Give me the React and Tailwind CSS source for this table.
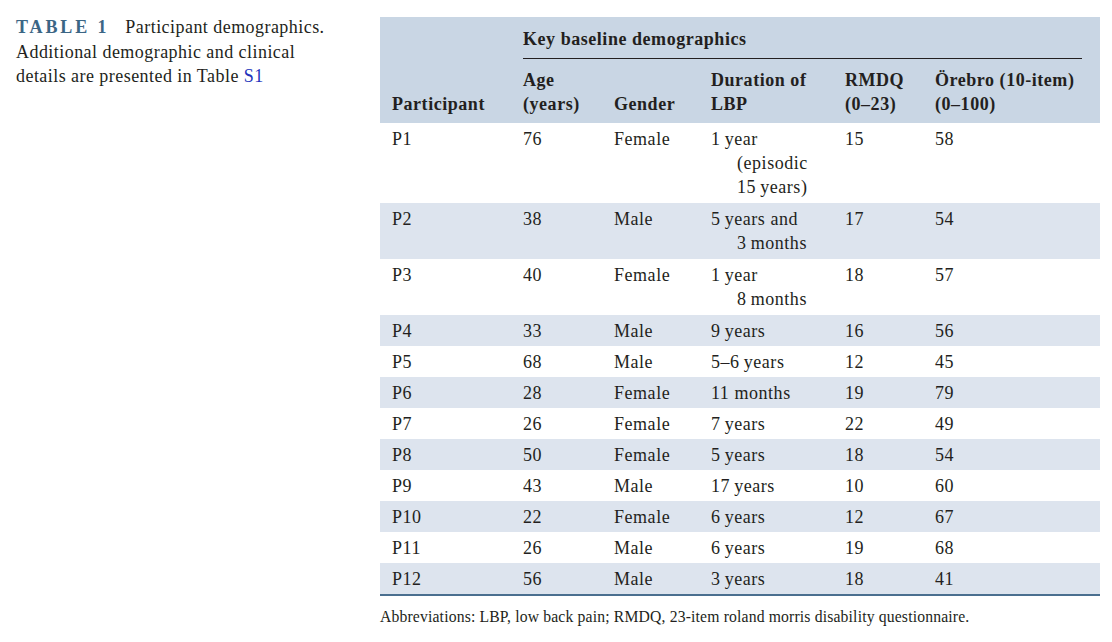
const rows = [
  { id: "P1", age: "76", gender: "Female", duration: ["1\u2009year", "(episodic", "15\u2009years)"], rmdq: "15", orebro: "58" },
  { id: "P2", age: "38", gender: "Male", duration: ["5\u2009years and", "3\u2009months"], rmdq: "17", orebro: "54" },
  { id: "P3", age: "40", gender: "Female", duration: ["1\u2009year", "8\u2009months"], rmdq: "18", orebro: "57" },
  { id: "P4", age: "33", gender: "Male", duration: ["9\u2009years"], rmdq: "16", orebro: "56" },
  { id: "P5", age: "68", gender: "Male", duration: ["5\u20136\u2009years"], rmdq: "12", orebro: "45" },
  { id: "P6", age: "28", gender: "Female", duration: ["11 months"], rmdq: "19", orebro: "79" },
  { id: "P7", age: "26", gender: "Female", duration: ["7\u2009years"], rmdq: "22", orebro: "49" },
  { id: "P8", age: "50", gender: "Female", duration: ["5\u2009years"], rmdq: "18", orebro: "54" },
  { id: "P9", age: "43", gender: "Male", duration: ["17\u2009years"], rmdq: "10", orebro: "60" },
  { id: "P10", age: "22", gender: "Female", duration: ["6\u2009years"], rmdq: "12", orebro: "67" },
  { id: "P11", age: "26", gender: "Male", duration: ["6\u2009years"], rmdq: "19", orebro: "68" },
  { id: "P12", age: "56", gender: "Male", duration: ["3\u2009years"], rmdq: "18", orebro: "41" },
];

const serif = { fontFamily: '"Liberation Serif", "Times New Roman", serif' };

function Duration({ lines }) {
  return (
    <div className="whitespace-nowrap">
      {lines.map((line, i) => (
        <div key={i} className={i === 0 ? "" : "pl-[26px]"}>{line}</div>
      ))}
    </div>
  );
}

export default function App() {
  return (
    <div className="flex bg-white text-[#231f20] w-[1112px] h-[642px]" style={serif}>
      <div className="w-[380px] shrink-0 pl-[16px] pt-[15px] text-[18px] leading-[24.5px] tracking-[0.025em] whitespace-nowrap">
        <div>
          <span className="font-bold text-[#3b6685] tracking-[0.16em] mr-[16px]">TABLE 1</span>
          Participant demographics.
        </div>
        <div>Additional demographic and clinical</div>
        <div>
          details are presented in Table <span className="text-[#2233bb]">S1</span>
        </div>
      </div>

      <div className="w-[720px] pt-[17px]">
        <table className="w-full border-collapse text-[18px] leading-[24px] tracking-[0.03em]">
          <colgroup>
            <col className="w-[131px]" />
            <col className="w-[91px]" />
            <col className="w-[97px]" />
            <col className="w-[134px]" />
            <col className="w-[90px]" />
            <col />
          </colgroup>
          <thead className="bg-[#c9d6e4] font-bold text-left">
            <tr>
              <th></th>
              <th colSpan={5} className="pl-[12px] pr-[18px] pt-[10px] pb-0 font-bold align-top">
                <div className="pb-[7px] border-b border-[#231f20]">Key baseline demographics</div>
              </th>
            </tr>
            <tr className="align-bottom">
              <th className="pl-[12px] pb-[7px] font-bold">Participant</th>
              <th className="pl-[12px] pt-[9px] pb-[7px] font-bold">Age<br />(years)</th>
              <th className="pl-[12px] pb-[7px] font-bold">Gender</th>
              <th className="pl-[12px] pb-[7px] font-bold">Duration of<br />LBP</th>
              <th className="pl-[12px] pb-[7px] font-bold">RMDQ<br />(0–23)</th>
              <th className="pl-[12px] pb-[7px] font-bold">Örebro (10-item)<br />(0–100)</th>
            </tr>
          </thead>
          <tbody>
            {rows.map((r, i) => {
              const pad = r.duration.length > 1 ? "pt-[4px] pb-[4px]" : "pt-[4px] pb-[3px]";
              return (
                <tr key={r.id} className={i % 2 === 1 ? "bg-[#dde4ee] align-top" : "align-top"}>
                  <td className={`pl-[12px] ${pad}`}>{r.id}</td>
                  <td className={`pl-[12px] ${pad}`}>{r.age}</td>
                  <td className={`pl-[12px] ${pad}`}>{r.gender}</td>
                  <td className={`pl-[12px] ${pad}`}>
                    <Duration lines={r.duration} />
                  </td>
                  <td className={`pl-[12px] ${pad}`}>{r.rmdq}</td>
                  <td className={`pl-[12px] ${pad}`}>{r.orebro}</td>
                </tr>
              );
            })}
          </tbody>
        </table>
        <div className="h-[2px] bg-[#4a6f8f]" />
        <p className="pt-[9px] text-[15.7px] tracking-[0.01em]">
          Abbreviations: LBP, low back pain; RMDQ, 23-item roland morris disability questionnaire.
        </p>
      </div>
    </div>
  );
}
